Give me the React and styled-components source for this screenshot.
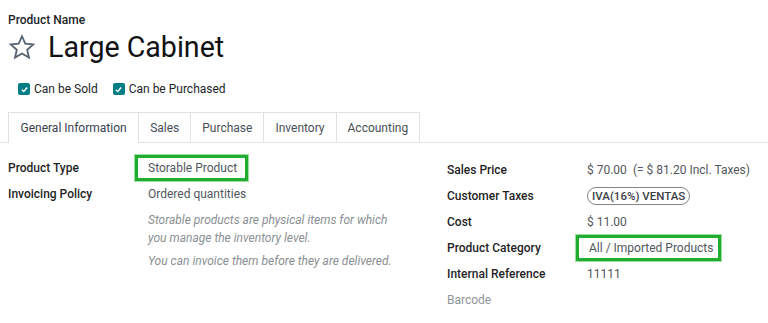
import React from "react";
import styled, { createGlobalStyle } from "styled-components";

const Global = createGlobalStyle`
  html, body { margin: 0; padding: 0; background: #fff; }
  body { font-family: Roboto, "Noto Sans", "Liberation Sans", sans-serif; font-size: 12px; color: #212529; }
`;

const Sheet = styled.div`
  width: 768px;
  height: 323px;
  overflow: hidden;
  padding-top: 13px;
  box-sizing: border-box;
`;

const TitleBlock = styled.div`
  padding-left: 8px;
`;

const NameLabel = styled.div`
  font-size: 12px;
  font-weight: 500;
  line-height: 15px;
  color: #212529;
`;

const TitleRow = styled.div`
  display: flex;
  align-items: center;
  gap: 12px;
  height: 38px;
`;

const Title = styled.h1`
  margin: 0;
  font-size: 28.6px;
  font-weight: 400;
  color: #111;
  line-height: 32px;
`;

const Checks = styled.div`
  display: flex;
  gap: 15px;
  padding-left: 18px;
  margin-top: 16px;
  height: 14px;
  align-items: center;
`;

const Check = styled.label`
  display: flex;
  align-items: center;
  gap: 4px;
  font-size: 12px;
  color: #212529;
`;

const Box = styled.span`
  width: 12px;
  height: 12px;
  border-radius: 2px;
  background: #017e84;
  display: inline-flex;
  align-items: center;
  justify-content: center;
`;

const TabBar = styled.div`
  display: flex;
  margin-top: 16px;
  padding-left: 8px;
  border-bottom: 1px solid #dee2e6;
  height: 30px;
`;

const Tab = styled.div`
  padding: 0 ${(p) => (p.$active ? "11.5px" : "11px")};
  display: flex;
  align-items: center;
  font-size: 12px;
  color: ${(p) => (p.$active ? "#374151" : "#495057")};
  border: 1px solid #dee2e6;
  border-left: ${(p) => (p.$first ? "1px solid #dee2e6" : "none")};
  border-bottom: none;
  background: #fff;
  margin-bottom: ${(p) => (p.$active ? "-1px" : "0")};
  box-sizing: border-box;
`;

const Body = styled.div`
  display: grid;
  grid-template-columns: 439px 1fr;
  padding-top: 12px;
`;

const Col = styled.div`
  display: grid;
  grid-template-columns: ${(p) => p.$cols};
  align-content: start;
  padding-left: 8px;
  padding-top: ${(p) => p.$pt || "0px"};
`;

const Label = styled.div`
  color: ${(p) => (p.$muted ? "#8f959c" : "#1f1f1f")};
  font-weight: ${(p) => (p.$muted ? 400 : 500)};
  height: 26px;
  display: flex;
  align-items: center;
`;

const Value = styled.div`
  color: #51575c;
  height: 26px;
  display: flex;
  align-items: center;
`;

const Boxed = styled.span`
  display: inline-flex;
  align-items: center;
  border: 3px solid #1fad2e;
  outline: 1px solid #9be0a2;
  padding: 0 ${(p) => p.$pr || "8px"} 0 10px;
  height: 26px;
  box-sizing: border-box;
  margin-left: ${(p) => p.$ml || "0"};
`;

const Help = styled.div`
  grid-column: 2;
  font-style: italic;
  color: #8a8f94;
  line-height: 18px;
  margin-top: ${(p) => p.$mt || "0"};
`;

const Muted = styled.span`
  margin-left: 6px;
`;

const Tag = styled.span`
  display: inline-flex;
  align-items: center;
  border: 1px solid #80868c;
  border-radius: 10px;
  padding: 0 4px;
  height: 16px;
  font-size: 11.5px;
  font-weight: 500;
  color: #3c4146;
`;

const Star = () => (
  <svg width="28" height="27" viewBox="0 0 24 24" fill="none" stroke="#56626f" strokeWidth="1.6" strokeLinejoin="miter">
    <polygon points="12,2 14.9,8.6 22,9.3 16.6,14 18.2,21 12,17.3 5.8,21 7.4,14 2,9.3 9.1,8.6" />
  </svg>
);

const Tick = () => (
  <svg width="9" height="9" viewBox="0 0 10 10">
    <path d="M2 5.2 L4.2 7.2 L8 2.8" stroke="#fff" strokeWidth="1.6" fill="none" />
  </svg>
);

export default function App() {
  return (
    <Sheet>
      <Global />
      <TitleBlock>
        <NameLabel>Product Name</NameLabel>
        <TitleRow>
          <Star />
          <Title>Large Cabinet</Title>
        </TitleRow>
      </TitleBlock>
      <Checks>
        <Check>
          <Box><Tick /></Box>
          Can be Sold
        </Check>
        <Check>
          <Box><Tick /></Box>
          Can be Purchased
        </Check>
      </Checks>
      <TabBar>
        <Tab $active $first>General Information</Tab>
        <Tab>Sales</Tab>
        <Tab>Purchase</Tab>
        <Tab>Inventory</Tab>
        <Tab>Accounting</Tab>
      </TabBar>
      <Body>
        <Col $cols="140px 1fr">
          <Label>Product Type</Label>
          <Value><Boxed $ml="-13px">Storable Product</Boxed></Value>
          <Label>Invoicing Policy</Label>
          <Value>Ordered quantities</Value>
          <Help $mt="4px">Storable products are physical items for which<br />you manage the inventory level.</Help>
          <Help $mt="5px">You can invoice them before they are delivered.</Help>
        </Col>
        <Col $cols="140px 1fr" $pt="2px">
          <Label>Sales Price</Label>
          <Value>$ 70.00<Muted>(= $ 81.20 Incl. Taxes)</Muted></Value>
          <Label>Customer Taxes</Label>
          <Value><Tag>IVA(16%) VENTAS</Tag></Value>
          <Label>Cost</Label>
          <Value>$ 11.00</Value>
          <Label>Product Category</Label>
          <Value><Boxed $ml="-11px" $pr="5px">All / Imported Products</Boxed></Value>
          <Label>Internal Reference</Label>
          <Value>11111</Value>
          <Label $muted>Barcode</Label>
          <Value />
        </Col>
      </Body>
    </Sheet>
  );
}
